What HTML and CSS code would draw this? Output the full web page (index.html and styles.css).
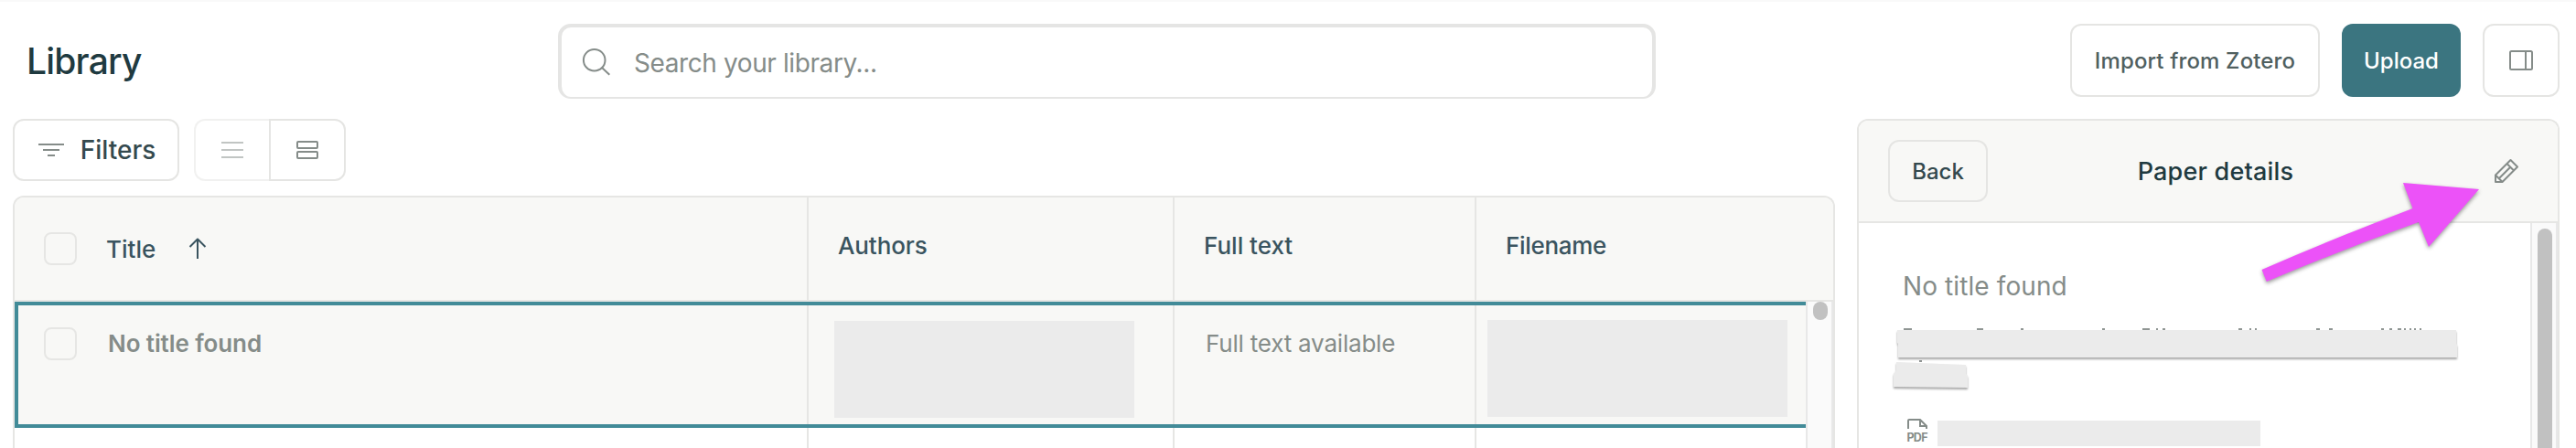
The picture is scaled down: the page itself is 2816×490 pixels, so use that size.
FILE: index.html
```html
<!DOCTYPE html>
<html lang="en">
<head>
    <meta charset="UTF-8">
    <meta name="viewport" content="width=device-width, initial-scale=1.0">
    <title>Library</title>
    <link rel="stylesheet" href="styles.css">
</head>
<body>
<!-- Top bar -->
<header class="topbar">
  <h1 class="page-title">Library</h1>
  <div class="search">
    <svg class="icon" width="32" height="32" viewBox="0 0 32 32"><circle cx="13.7" cy="13.7" r="11.8"/><path d="M22 22l8.300 7.800"/></svg>
    <span class="search-text">Search your library...</span>
  </div>
  <div class="actions">
    <button class="btn import-btn"><span>Import from Zotero</span></button>
    <button class="btn upload-btn"><span>Upload</span></button>
    <button class="btn panel-btn" aria-label="Toggle panel">
      <svg class="icon" width="26" height="22" viewBox="0 0 26 22"><rect x="1" y="1" width="24" height="20" rx="1.5"/><path d="M18 1v20"/></svg>
    </button>
  </div>
</header>

<main class="layout">
  <section class="library">
    <!-- Filters and view switch -->
    <div class="toolbar">
      <button class="btn filters-btn">
        <svg class="icon" width="28" height="14" viewBox="0 0 28 14"><path d="M0 1h28M5 7h18M10 13h8"/></svg>
        <span>Filters</span>
      </button>
      <div class="view-switch">
        <button class="view view-list" aria-label="List view">
          <svg class="icon" width="24" height="18" viewBox="0 0 24 18"><path d="M0 1h24M0 9h24M0 17h24"/></svg>
        </button>
        <button class="view view-cards" aria-label="Card view">
          <svg class="icon" width="24" height="20" viewBox="0 0 24 20"><rect x="1" y="1" width="22" height="7" rx="1"/><rect x="1" y="12" width="22" height="7" rx="1"/></svg>
        </button>
      </div>
    </div>

    <!-- Papers table -->
    <div class="table">
      <div class="table-head">
        <div class="cell head-title">
          <span class="checkbox"></span>
          <span class="title-label">Title</span>
          <svg class="icon sort" width="20" height="24" viewBox="0 0 20 24"><path d="M10 23V2M1.500 10L10 1.500l8.500 8.500"/></svg>
        </div>
        <div class="cell"><span class="authors-label">Authors</span></div>
        <div class="cell"><span class="fulltext-label">Full text</span></div>
        <div class="cell"><span class="filename-label">Filename</span></div>
      </div>
      <div class="table-body">
        <div class="rows">
          <div class="row selected">
            <div class="cell">
              <span class="checkbox"></span>
              <span class="paper-title">No title found</span>
            </div>
            <div class="cell"><div class="redacted authors-block"></div></div>
            <div class="cell"><span class="available">Full text available</span></div>
            <div class="cell"><div class="redacted filename-block"></div></div>
          </div>
          <div class="row">
            <div class="cell"></div>
            <div class="cell"></div>
            <div class="cell"></div>
            <div class="cell"></div>
          </div>
        </div>
        <div class="scroll-track table-scroll"><div class="scroll-thumb"></div></div>
      </div>
    </div>
  </section>

  <!-- Paper details panel -->
  <aside class="details">
    <div class="details-head">
      <button class="btn back-btn"><span>Back</span></button>
      <h2 class="details-title">Paper details</h2>
      <svg class="icon pencil" width="26" height="26" viewBox="0 0 26 26"><path d="M1 17.500L17.500 1l7.500 7.500L8.500 25H1zM13.500 5l7.500 7.500M4.500 21.500L17 9M1 17.500l7.500 7.500"/></svg>
    </div>
    <div class="details-body">
      <div class="details-content">
        <p class="details-name">No title found</p>
        <div class="people">
          <svg width="640" height="70" viewBox="0 0 640 70">
            <path class="glyph-tops" d="M21 7h9M101 7h7M149 7h3M238 7h3M282 7h8M297 7h2M304 7h3"/>
            <path class="glyph-tops" d="M387 7h4M399 7h2M405 7h2M472 7h4M486 7h4M543 7h3M552 7h3M561 7h4M568 7h2M574 7h2M579 7h2M585 7h2M38 42h3"/>
            <path class="cover" d="M14 8h611v15l1 1v14H15V23l-1-1z"/>
            <path class="cover" d="M13 43l76 3v10l2 2v13l-81-1V56l3-4z"/>
          </svg>
        </div>
        <div class="file">
          <svg class="pdf" width="24" height="26" viewBox="0 0 24 26">
            <path d="M2 12V3q0-1 1-1h12l7 7v3M15 2v7h7"/>
            <text x="0.500" y="26" textLength="23">PDF</text>
          </svg>
          <div class="redacted file-block"></div>
        </div>
      </div>
      <div class="scroll-track details-scroll"><div class="scroll-thumb"></div></div>
    </div>
  </aside>
</main>

<!-- Arrow pointing at the edit icon -->
<svg class="arrow" width="260" height="130" viewBox="0 0 260 130"><path d="M12.500 105Q90 71 177.500 38L167 10l83 7-55 63-11-27Q100 83 17.800 118z"/></svg>
</body>
</html>
```

FILE: styles.css
```css
* {
  box-sizing: border-box;
}

body {
  margin: 0;
  width: 2816px;
  height: 490px;
  overflow: hidden;
  background-color: #ffffff;
  border-top: 2px solid #f9f9f9;
  font-family: Inter, "Liberation Sans", sans-serif;
  color: #1f3a40;
}

h1, h2, p {
  margin: 0;
}

button {
  font-family: inherit;
  padding: 0;
}

svg {
  display: block;
  flex: none;
  overflow: visible;
}

span, h1, h2, p {
  white-space: nowrap;
}

.icon {
  fill: none;
  stroke: #858c89;
  stroke-width: 2;
  stroke-linejoin: round;
}

/* Top bar */
.topbar {
  display: flex;
  align-items: flex-start;
  height: 128px;
  padding: 24px 18px 0 29px;
}

.page-title {
  width: 581px;
  font-size: 39px;
  font-weight: 500;
  line-height: 82px;
  letter-spacing: -0.8px;
}

.search {
  display: flex;
  align-items: center;
  width: 1200px;
  height: 82px;
  padding-left: 22px;
  gap: 25px;
  border: 4px solid #e5e5e4;
  border-bottom-width: 2px;
  border-radius: 14px;
}

.search-text {
  padding-top: 2px;
  font-size: 28px;
  letter-spacing: -0.4px;
  color: #858c89;
}

.actions {
  display: flex;
  gap: 24px;
  margin-left: auto;
}

.btn {
  display: flex;
  align-items: center;
  justify-content: center;
  height: 80px;
  border: 2px solid #e5e5e3;
  border-radius: 12px;
  background-color: #ffffff;
  color: #50605f;
  font-size: 24px;
  font-weight: 500;
}

.import-btn {
  width: 273px;
  letter-spacing: 0.15px;
}

.upload-btn {
  width: 130px;
  border: none;
  background-color: #3b7580;
  color: #ffffff;
}

.panel-btn {
  width: 84px;
}

/* Page columns */
.layout {
  display: flex;
  align-items: flex-start;
  gap: 24px;
  padding: 0 18px 0 14px;
}

.library {
  width: 1992px;
}

/* Toolbar */
.toolbar {
  display: flex;
  gap: 16px;
}

.filters-btn {
  width: 182px;
  height: 68px;
  padding-left: 2px;
  gap: 18px;
  color: #34494e;
  font-size: 28px;
}

.view-switch {
  display: flex;
}

.view {
  display: flex;
  align-items: center;
  justify-content: center;
  height: 68px;
  background-color: #ffffff;
  border: 2px solid #e5e5e3;
}

.view-list {
  width: 82px;
  border-right: none;
  border-radius: 12px 0 0 12px;
  opacity: 0.5;
}

.view-cards {
  width: 84px;
  border-radius: 0 12px 12px 0;
}

/* Table */
.table {
  height: 290px;
  margin-top: 16px;
  border: 2px solid #e6e6e4;
  border-bottom: none;
  border-radius: 12px 12px 0 0;
  overflow: hidden;
}

.table-head,
.row {
  display: grid;
  grid-template-columns: 868px 400px 330px 1fr;
}

.table-head {
  height: 114px;
  background-color: #f8f8f6;
  border-bottom: 2px solid #e6e6e4;
  color: #3a545f;
  font-size: 26px;
  font-weight: 500;
}

.table-body {
  display: flex;
}

.rows {
  width: 1958px;
}

.cell {
  display: flex;
  align-items: flex-start;
  border-right: 2px solid #e6e6e4;
}

.cell:last-child {
  border-right: none;
}

.checkbox {
  width: 36px;
  height: 36px;
  margin: 38px 32px 0;
  border: 2px solid #e6e6e4;
  border-radius: 8px;
}

.title-label {
  margin-top: 41px;
}

.sort {
  margin: 44px 0 0 36px;
  stroke: #3a545f;
}

.authors-label,
.fulltext-label,
.filename-label {
  margin: 37px 0 0 32px;
}

.authors-label {
  letter-spacing: -0.1px;
}

.filename-label {
  letter-spacing: -0.3px;
}

.row {
  height: 138px;
}

.selected {
  background-color: #f8f8f6;
  border: 4px solid #428b98;
  border-right: none;
  grid-template-columns: 864px 400px 330px 1fr;
  color: #858c89;
  font-size: 26px;
}

.selected .checkbox {
  margin: 24px 34px 0 28px;
}

.paper-title {
  margin-top: 26px;
  font-weight: 600;
  letter-spacing: -0.1px;
}

.available {
  margin: 26px 0 0 34px;
  letter-spacing: -0.2px;
}

.redacted {
  background-color: #ebebeb;
}

.authors-block,
.filename-block {
  width: 328px;
  height: 106px;
}

.authors-block {
  margin: 17px 0 0 28px;
}

.filename-block {
  margin: 16px 0 0 12px;
}

/* Scrollbars */
.scroll-track {
  width: 30px;
  background-color: #fafafa;
  border: 2px solid #e8e8e8;
  border-top: none;
  border-bottom: none;
}

.scroll-thumb {
  width: 16px;
  margin-left: 6px;
  border-radius: 8px;
  background-color: #c1c1c1;
}

.table-scroll {
  height: 176px;
}

.table-scroll .scroll-thumb {
  height: 20px;
}

/* Paper details */
.details {
  width: 768px;
  height: 362px;
  border: 2px solid #e6e6e4;
  border-bottom: none;
  border-radius: 12px 12px 0 0;
  overflow: hidden;
}

.details-head {
  display: flex;
  align-items: center;
  justify-content: space-between;
  height: 112px;
  padding: 0 43px 0 32px;
  background-color: #f8f8f6;
  border-bottom: 2px solid #e6e6e4;
}

.back-btn {
  width: 109px;
  height: 68px;
  background-color: transparent;
  color: #34494e;
}

.details-title {
  margin-right: 56px;
  font-size: 27px;
  font-weight: 500;
  letter-spacing: 0.2px;
}

.details-body {
  display: flex;
  justify-content: space-between;
}

.details-content {
  padding: 52px 0 0 28px;
}

.details-name {
  padding-left: 20px;
  font-size: 28px;
  line-height: 34px;
  letter-spacing: 0.1px;
  color: #858c89;
}

.people {
  height: 76px;
  margin-top: 23px;
}

.glyph-tops {
  fill: none;
  stroke: #8f9593;
  stroke-width: 2;
}

.cover {
  fill: #ebebeb;
  filter: drop-shadow(0 2px 1px rgba(0, 0, 0, 0.35));
}

.file {
  display: flex;
  margin-top: 28px;
  padding-left: 24px;
  gap: 10px;
}

.pdf path {
  fill: none;
  stroke: #858c89;
  stroke-width: 2;
}

.pdf text {
  font-size: 12.5px;
  font-weight: 700;
  fill: #858c89;
}

.file-block {
  width: 353px;
  height: 28px;
  margin-top: 3px;
}

.details-scroll {
  height: 246px;
  padding-top: 6px;
}

.details-scroll .scroll-thumb {
  height: 300px;
}

/* Arrow */
.arrow {
  position: absolute;
  left: 2460px;
  top: 190px;
  fill: #ec52f8;
  filter: drop-shadow(0 2px 2px rgba(0, 0, 0, 0.4));
}
```
